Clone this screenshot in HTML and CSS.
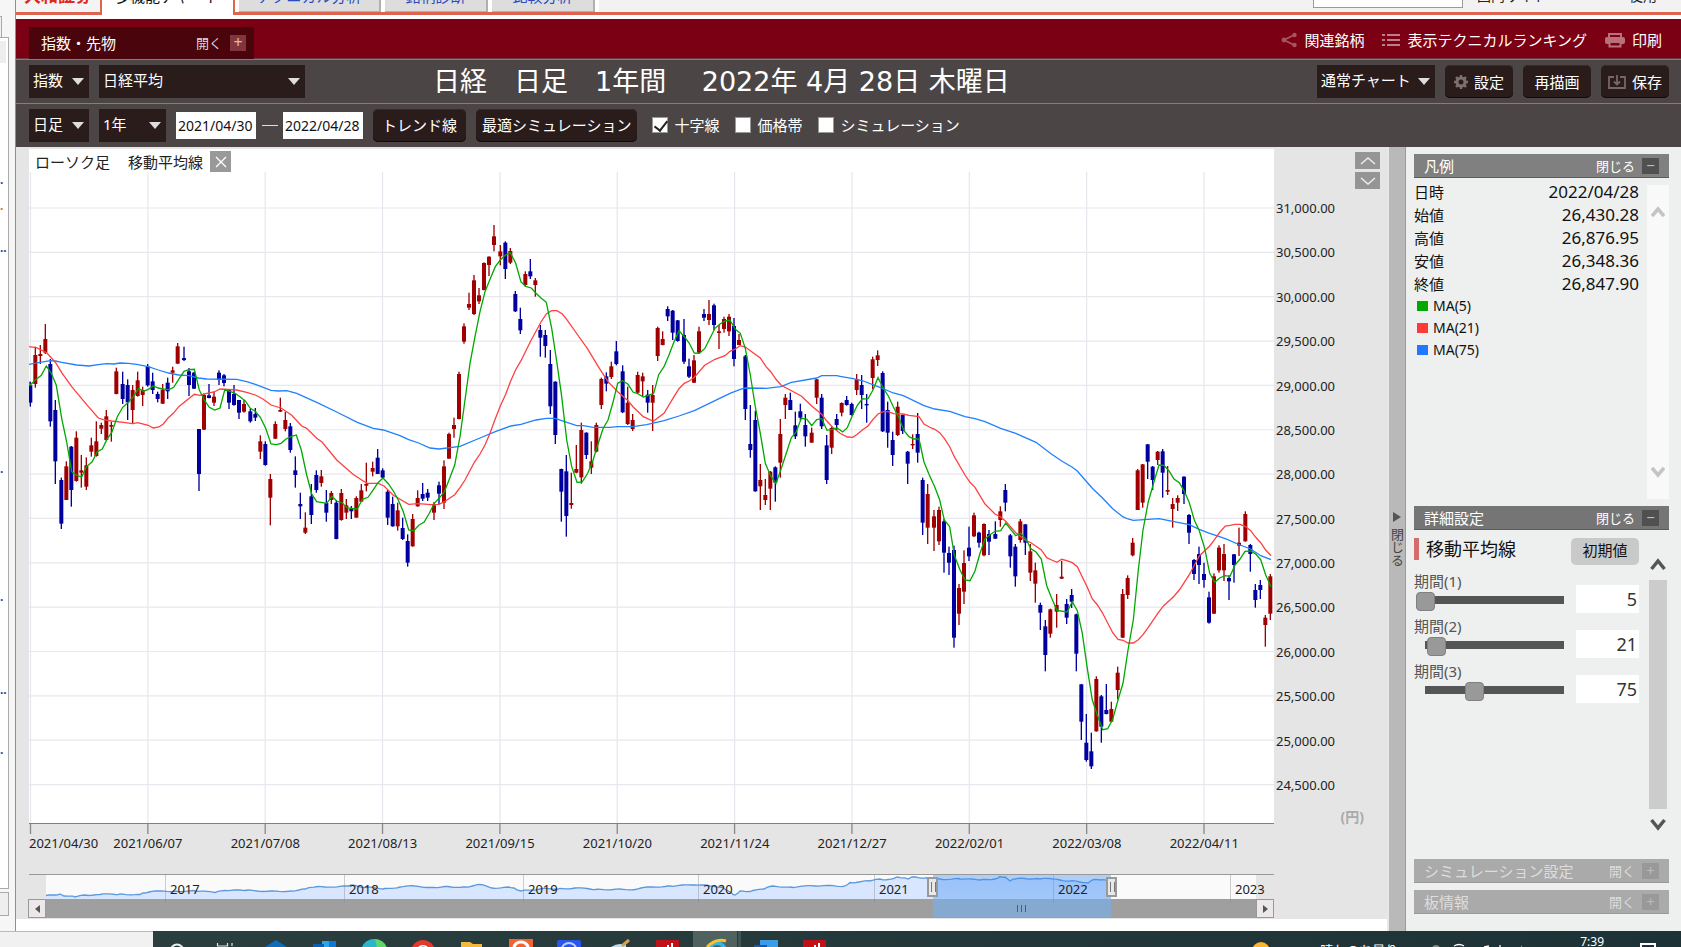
FILE: index.html
```
<!DOCTYPE html>
<html lang="ja">
<head>
<meta charset="utf-8">
<title>多機能チャート</title>
<link rel="stylesheet" href="styles.css">
</head>
<body>
<div class="screen">
  <aside class="rail">
    <div class="rail-tab"></div>
    <div class="rail-box">
      <div class="rail-head"></div>
      <span class="rail-dot d1">.</span>
      <span class="rail-dot d2 warm">.</span>
      <span class="rail-dot d3">..</span>
      <span class="rail-dot d4">.</span>
      <span class="rail-dot d5">.</span>
      <span class="rail-dot d6">..</span>
      <span class="rail-dot d7">.</span>
    </div>
    <div class="rail-button"></div>
  </aside>

  <div class="app">
    <nav class="tabs">
      <a class="tab brand" href="#">大和証券</a>
      <a class="tab active" href="#">多機能チャート</a>
      <a class="tab wide" href="#">テクニカル分析</a>
      <a class="tab" href="#">銘柄診断</a>
      <a class="tab" href="#">比較分析</a>
      <div class="tab-fill">
        <input class="site-search" type="text" aria-label="検索">
        <a class="site-link" href="#">国内サイト</a>
        <a class="site-link help" href="#">使用</a>
      </div>
    </nav>

    <header class="topbar">
      <button class="market" type="button"><span>指数・先物</span><span class="market-open">開く</span><span class="plus">+</span></button>
      <div class="top-links">
        <a href="#"><svg width="16" height="16" viewBox="0 0 16 16"><path d="M14 2.500L3 8l11 5.500" fill="none" stroke="#a85460" stroke-width="1.800"/><circle cx="13.500" cy="3" r="2.200" fill="#a85460"/><circle cx="3" cy="8" r="2.400" fill="#a85460"/><circle cx="13.500" cy="13" r="2.200" fill="#a85460"/></svg>関連銘柄</a>
        <a href="#"><svg width="18" height="16" viewBox="0 0 18 16"><path d="M0 3h3M0 8h3M0 13h3M5 3h13M5 8h13M5 13h13" stroke="#b9808a" stroke-width="2"/></svg>表示テクニカルランキング</a>
        <a href="#"><svg width="20" height="16" viewBox="0 0 20 16"><path d="M4 5V2h12v3" fill="none" stroke="#b9707a" stroke-width="2"/><rect y="5" width="20" height="7" rx="2" fill="#b9707a"/><path d="M4.500 10h11v4.500h-11z" fill="#7c0014" stroke="#b9707a" stroke-width="2"/></svg>印刷</a>
      </div>
    </header>

    <div class="bar">
      <span class="pick w60"><select aria-label="区分"><option>指数</option></select></span>
      <span class="pick w206"><select aria-label="銘柄"><option>日経平均</option></select></span>
      <h1 class="title">日経　日足　1年間　 2022年 4月 28日 木曜日</h1>
      <div class="bar-right">
        <span class="pick w118"><select aria-label="チャート種別"><option>通常チャート</option></select></span>
        <button class="btn" type="button"><svg width="14" height="14" viewBox="0 0 14 14"><circle cx="7" cy="7" r="4" fill="none" stroke="#7d7070" stroke-width="3"/><path d="M7 0v2.500M7 11.500V14M0 7h2.500M11.500 7H14M2 2l1.800 1.800M10.200 10.200L12 12M12 2l-1.800 1.800M3.800 10.200L2 12" stroke="#7d7070" stroke-width="2.400"/></svg>設定</button>
        <button class="btn" type="button">再描画</button>
        <button class="btn" type="button"><svg width="18" height="14" viewBox="0 0 18 14"><path d="M6 2H1v11h16V2h-5M9 0v9M6 6.500l3 3 3-3" fill="none" stroke="#756868" stroke-width="1.800"/></svg>保存</button>
      </div>
    </div>

    <div class="bar second">
      <span class="pick w60"><select aria-label="足種"><option>日足</option></select></span>
      <span class="pick w67"><select aria-label="期間"><option>1年</option></select></span>
      <input class="date" type="text" value="2021/04/30" aria-label="開始日">
      <span class="dash"></span>
      <input class="date" type="text" value="2022/04/28" aria-label="終了日">
      <button class="btn gap" type="button">トレンド線</button>
      <button class="btn snug" type="button">最適シミュレーション</button>
      <label class="check first"><input type="checkbox" checked>十字線</label>
      <label class="check"><input type="checkbox">価格帯</label>
      <label class="check"><input type="checkbox">シミュレーション</label>
    </div>

    <div class="work">
      <main class="chart-col">
        <section class="chart">
          <div class="plot-row">
            <div class="plot">
              <svg id="plot" class="plot-svg" viewBox="0 0 1245 686" preserveAspectRatio="none"></svg>
              <div class="plot-legend"><span>ローソク足</span><span>移動平均線</span><button class="close" type="button" aria-label="削除"><svg width="12" height="12" viewBox="0 0 12 12"><path d="M1 1l10 10M11 1L1 11" stroke="#fff" stroke-width="1.300"/></svg></button></div>
            </div>
            <div class="prices">
              <span>31,000.00</span><span>30,500.00</span><span>30,000.00</span><span>29,500.00</span><span>29,000.00</span><span>28,500.00</span><span>28,000.00</span><span>27,500.00</span><span>27,000.00</span><span>26,500.00</span><span>26,000.00</span><span>25,500.00</span><span>25,000.00</span><span>24,500.00</span>
            </div>
            <div class="tools">
              <button class="step" type="button" aria-label="上へ"><svg width="16" height="8" viewBox="0 0 16 8"><path d="M1 7l7-6 7 6" fill="none" stroke="#eee" stroke-width="1.400"/></svg></button>
              <button class="step" type="button" aria-label="下へ"><svg width="16" height="8" viewBox="0 0 16 8"><path d="M1 1l7 6 7-6" fill="none" stroke="#eee" stroke-width="1.400"/></svg></button>
              <span class="unit">(円)</span>
            </div>
          </div>
          <div class="dates">
            <span class="start">2021/04/30</span><span>2021/06/07</span><span>2021/07/08</span><span>2021/08/13</span><span>2021/09/15</span><span>2021/10/20</span><span>2021/11/24</span><span>2021/12/27</span><span>2022/02/01</span><span>2022/03/08</span><span>2022/04/11</span>
          </div>
          <div class="navigator">
            <div class="nav-view">
              <svg id="overview" class="nav-svg" viewBox="46 875 1210 24" preserveAspectRatio="none"></svg>
              <div class="nav-select"><i class="grip"></i><i class="grip"></i></div>
            </div>
            <div class="years"><i></i><span>2017</span><span>2018</span><span>2019</span><span>2020</span><span>2021</span><span>2022</span><span>2023</span></div>
          </div>
          <div class="scroll">
            <button type="button" aria-label="前へ"><svg width="5" height="8" viewBox="0 0 5 8"><path d="M5 0v8L0 4z" fill="#555"/></svg></button>
            <div class="scroll-track"><div class="scroll-thumb"><svg width="9" height="7" viewBox="0 0 9 7"><path d="M.5 0v7M4.500 0v7M8.500 0v7" stroke="#44607c"/></svg></div></div>
            <button type="button" aria-label="次へ"><svg width="5" height="8" viewBox="0 0 5 8"><path d="M0 0v8l5-4z" fill="#555"/></svg></button>
          </div>
        </section>
      </main>

      <button class="splitter" type="button"><svg width="8" height="10" viewBox="0 0 8 10"><path d="M0 0l8 5-8 5z" fill="#555"/></svg><span>閉じる</span></button>

      <aside class="panel">
        <button class="head" type="button"><span>凡例</span><span class="toggle">閉じる</span><i class="sign">−</i></button>
        <div class="legend">
          <div class="legend-body">
            <table>
              <tr><th>日時</th><td>2022/04/28</td></tr>
              <tr><th>始値</th><td>26,430.28</td></tr>
              <tr><th>高値</th><td>26,876.95</td></tr>
              <tr><th>安値</th><td>26,348.36</td></tr>
              <tr><th>終値</th><td>26,847.90</td></tr>
            </table>
            <div class="ma"><i class="green"></i>MA(5)</div>
            <div class="ma"><i class="red"></i>MA(21)</div>
            <div class="ma"><i class="blue"></i>MA(75)</div>
          </div>
          <div class="vbar pale">
            <svg width="14" height="12" viewBox="0 0 14 12"><path d="M1 10l6-7 6 7" fill="none" stroke="#c4c4c4" stroke-width="3.500"/></svg>
            <svg width="14" height="12" viewBox="0 0 14 12"><path d="M1 2l6 7 6-7" fill="none" stroke="#c4c4c4" stroke-width="3.500"/></svg>
          </div>
        </div>

        <button class="head dark" type="button"><span>詳細設定</span><span class="toggle">閉じる</span><i class="sign">−</i></button>
        <div class="detail">
          <div class="detail-body">
            <div class="detail-title"><h2>移動平均線</h2><button class="reset" type="button">初期値</button></div>
            <div class="term"><label for="t1">期間(1)</label><input id="t1" type="range" min="5" max="204" value="5"><input class="num" type="text" value="5" aria-label="期間(1)の値"></div>
            <div class="term"><label for="t2">期間(2)</label><input id="t2" type="range" min="5" max="204" value="21"><input class="num" type="text" value="21" aria-label="期間(2)の値"></div>
            <div class="term"><label for="t3">期間(3)</label><input id="t3" type="range" min="5" max="204" value="75"><input class="num" type="text" value="75" aria-label="期間(3)の値"></div>
          </div>
          <div class="vbar">
            <svg width="16" height="13" viewBox="0 0 16 13"><path d="M1.500 11L8 3l6.500 8" fill="none" stroke="#555" stroke-width="3.500"/></svg>
            <div class="vthumb"></div>
            <svg width="16" height="13" viewBox="0 0 16 13"><path d="M1.500 2L8 10l6.500-8" fill="none" stroke="#555" stroke-width="3.500"/></svg>
          </div>
        </div>
        <button class="head off" type="button"><span>シミュレーション設定</span><span class="toggle">開く</span><i class="sign">+</i></button>
        <button class="head off" type="button"><span>板情報</span><span class="toggle">開く</span><i class="sign">+</i></button>
      </aside>
    </div>
  </div>
</div>

<footer class="taskbar">
  <div class="status"></div>
  <div class="icons">
    <svg width="690" height="16" viewBox="153 931 690 16">
      <rect x="693" y="931" width="44" height="16" fill="#506260"/><rect x="738" y="931" width="3" height="16" fill="#3f5452"/>
      <circle cx="177" cy="951" r="6.500" fill="none" stroke="#e8eeee" stroke-width="2"/>
      <path d="M217.500 943v3h10v-3M232 943v3" fill="none" stroke="#dfe6e6" stroke-width="1.200"/>
      <path d="M262 949l14-9 14 9z" fill="#0f6cbd"/>
      <path d="M322 941h14v6h-14z" fill="#28a8ea"/><path d="M329 941h7v6h-7z" fill="#0f78d4"/><path d="M313 944h11v3h-11z" fill="#0a5fb4"/>
      <circle cx="374" cy="952" r="13" fill="#29b6c8"/><path d="M375 939a13 13 0 0 1 12 9h-10z" fill="#5ed66a"/>
      <circle cx="423" cy="952" r="12" fill="#e23b2e"/><circle cx="423" cy="952" r="7" fill="#fff"/><circle cx="423" cy="952" r="5.500" fill="#2b7de9"/>
      <path d="M461 942h9l3 2h9v3h-21z" fill="#f3b93a"/>
      <rect x="509" y="939" width="24" height="10" fill="#f4622e"/><path d="M514 948a7 6 0 0 1 14 0" fill="none" stroke="#fff" stroke-width="3"/>
      <rect x="557" y="940" width="24" height="10" rx="2" fill="#2a55f0"/><path d="M562 949a7 6 0 0 1 14 0" fill="none" stroke="#bcd0ff" stroke-width="2"/>
      <path d="M611 947q7-5 15-2v2z" fill="#bcdcec"/><path d="M622 946l7-6" stroke="#d8a050" stroke-width="3"/>
      <rect x="656" y="940" width="23" height="9" rx="1" fill="#c01018"/><path d="M668 947v-2M672 947v-4" stroke="#fff" stroke-width="2"/>
      <circle cx="717" cy="951" r="8" fill="none" stroke="#35b4e8" stroke-width="4"/><path d="M707 947q9-9 19-6" fill="none" stroke="#f4c430" stroke-width="3"/>
      <rect x="760" y="940" width="18" height="8" fill="#3b9de8"/><rect x="754" y="945" width="13" height="3" fill="#1558b0"/>
      <rect x="803" y="940" width="23" height="9" rx="1" fill="#c01018"/><path d="M815 947v-2M819 947v-4" stroke="#fff" stroke-width="2"/>
    </svg>
  </div>
  <div class="tray">
    <svg class="sun" width="18" height="16" viewBox="0 0 18 16"><circle cx="9" cy="20" r="9" fill="#ffb52a"/></svg>
    <span class="weather">晴れのち曇り</span>
    <svg width="90" height="16" viewBox="0 0 90 16"><circle cx="4" cy="18" r="4" fill="#888"/><path d="M22 15q5-3 10 0M52 16l5-1M68 16v-2M90 16l1-3" fill="none" stroke="#fff" stroke-width="1.300"/></svg>
    <span class="clock">7:39</span>
    <svg width="16" height="16" viewBox="0 0 16 16"><path d="M1 18v-5h14v5" fill="none" stroke="#fff" stroke-width="2"/></svg>
  </div>
</footer>
<script src="chart.js"></script>
</body>
</html>
```

FILE: styles.css
```
* { box-sizing: border-box; }
body {
  margin: 0;
  height: 100vh;
  overflow: hidden;
  display: flex;
  flex-direction: column;
  background: #fff;
  color: #222;
  font: 15px/20px "Noto Sans", "Noto Sans CJK JP", sans-serif;
}
button, input, select { font: inherit; color: inherit; margin: 0; }
button { border: 0; padding: 0; background: none; cursor: pointer; }
a { color: inherit; text-decoration: none; }
svg { display: block; flex: none; }
i { font-style: normal; }

.screen { flex: 1; min-height: 0; display: flex; }

/* left rail */
.rail { flex: none; width: 16px; background: #f6f6f6; border-right: 1px solid #8c8ca4; display: flex; flex-direction: column; padding-top: 16px; }
.rail-tab { width: 2px; height: 21px; background: #f2f2f2; border-top: 1px solid #aaa; border-right: 1px solid #aaa; }
.rail-box { position: relative; width: 9px; flex: 1; background: #fff; border: solid #aaa; border-width: 1px 1px 1px 0; padding-top: 3px; }
.rail-head { height: 22px; width: 6px; background: #eee; }
.rail-button { width: 9px; height: 24px; margin: 3px 0 15px; background: #eee; border: solid #aaa; border-width: 1px 1px 1px 0; }
.rail-dot { position: absolute; left: 0; font-size: 12px; line-height: 12px; font-weight: 700; color: #1a4c9c; }
.warm { color: #c07a20; }
.d1 { top: 16%; }
.d2 { top: 19%; }
.d3 { top: 24%; }
.d4 { top: 50%; }
.d5 { top: 65%; }
.d6 { top: 76%; }
.d7 { top: 83%; }

.app { flex: 1; min-width: 0; display: flex; flex-direction: column; }

/* site tabs */
.tabs { height: 19px; display: flex; align-items: flex-end; overflow: hidden; padding-bottom: 4px; }
.tab { flex: none; width: 103px; height: 40px; margin: 0 4px 3px 0; padding-top: 12px; background: #ddd; border: solid #b0b0b0; border-width: 0 2px 1px 0; box-shadow: 0 3px #de6450; color: #2a4cc0; line-height: 24px; text-align: center; white-space: nowrap; position: relative; }
.tab::after { content: ""; position: absolute; top: 40px; right: -7px; width: 5px; height: 3px; background: #de6450; }
.tab.wide { width: 142px; }
.tab.brand { width: 86px; margin-right: 0; background: #f4f4f4; border-color: #de6450; border-bottom: 0; color: #e02a20; font-weight: 700; font-size: 17px; }
.tab.active { width: 133px; height: 43px; margin-bottom: 0; background: #fff; border-color: #de6450; border-bottom: 0; box-shadow: none; color: #111; }
.tab.brand::after { display: none; }
.tab-fill { flex: 1; height: 15px; display: flex; justify-content: flex-end; background: #f2f2f2; border-bottom: 3px solid #de6450; padding-right: 24px; }
.site-search { width: 150px; height: 30px; margin-top: -22px; border: 1px solid #999; background: #fff; }
.site-link { margin: -13px 0 0 14px; font-size: 14px; line-height: 18px; white-space: nowrap; }
.site-link.help { margin-left: 82px; }

/* red band */
.topbar { height: 40px; background: #7c0014; display: flex; justify-content: space-between; border-bottom: 1px solid #6b3a3e; padding-left: 13px; color: #fff; }
.market { width: 225px; height: 32px; margin-top: 8px; padding: 0 8px 0 12px; background: #49040c; display: flex; align-items: center; font-size: 15px; }
.market-open { margin-left: auto; font-size: 13px; color: #ddd; }
.plus { width: 16px; height: 16px; margin-left: 8px; background: #82353d; color: #ddb8bb; font-size: 16px; line-height: 15px; }
.top-links { display: flex; align-items: center; gap: 18px; padding: 2px 19px 0 0; }
.top-links a { display: flex; align-items: center; gap: 7px; }

/* control bars */
.bar { height: 44px; background: #4b4645; border-top: 1px solid #837d7c; display: flex; align-items: center; padding: 0 12px 0 13px; color: #fff; }
.second { padding-bottom: 1px; }
.pick { position: relative; height: 33px; margin-right: 10px; display: block; flex: none; }
.pick select { appearance: none; width: 100%; height: 100%; border: 0; border-radius: 0; background: #2a1c1b; padding: 0 0 3px 4px; }
.pick::after { content: ""; position: absolute; right: 5px; top: 13px; border: solid transparent; border-width: 7px 6px 0; border-top-color: #ddd; pointer-events: none; }
.w60 { width: 60px; }
.w67 { width: 67px; }
.w118 { width: 118px; }
.w206 { width: 206px; }
.title { margin: 0 0 0 118px; font: 400 27px/36px "DejaVu Sans", "Noto Sans CJK JP", sans-serif; white-space: pre; }
.bar-right { margin-left: auto; display: flex; }
.btn { height: 33px; padding: 0 9px; margin-right: 10px; background: #2a1c1b; border-radius: 5px; box-shadow: inset 0 -1px #120909, inset 0 1px #382a29; display: flex; align-items: center; justify-content: center; gap: 6px; white-space: nowrap; }
.bar-right .btn { width: 68px; padding: 0; }
.bar-right .btn:last-child { margin-right: 0; }
.btn.snug { padding: 0 6px; }
.gap { margin-left: 10px; }
.date { width: 80px; height: 27px; border: 0; padding: 0 2px; background: #fff; color: #111; font-size: 14px; }
.dash { width: 16px; height: 1px; margin: 0 5px 0 6px; background: #ddd; }
.check { display: flex; align-items: center; gap: 6px; margin-left: 16px; }
.check.first { margin-left: 5px; }
.check input { appearance: none; width: 16px; height: 16px; background: #fff; border: 1px solid #999; position: relative; }
.check input:checked::after { content: ""; position: absolute; left: 4px; top: 0; width: 6px; height: 11px; border: solid #222; border-width: 0 2px 2px 0; transform: rotate(38deg); }

/* work area */
.work { flex: 1; min-height: 0; display: flex; }
.chart-col { flex: 1; min-width: 0; display: flex; padding-bottom: 12px; background: #fff; }
.chart { flex: 1; min-width: 0; display: flex; flex-direction: column; background: #e5e5e5; padding: 2px 0 1px 13px; }
.plot-row { flex: 1; min-height: 0; display: flex; }
.plot { position: relative; flex: 1; min-width: 0; }
.plot-svg { position: absolute; width: 100%; height: 100%; }
.plot-legend { position: absolute; left: 6px; top: 2px; display: flex; gap: 18px; align-items: center; line-height: 18px; padding-bottom: 2px; }
.close { width: 21px; height: 21px; margin-left: -11px; background: #999; display: flex; align-items: center; justify-content: center; }
.prices { flex: none; width: 66px; padding: 49px 0 40px 2px; display: flex; flex-direction: column; justify-content: space-between; font-size: 13px; }
.tools { flex: none; width: 47px; padding: 3px 7px 8px 0; display: flex; flex-direction: column; align-items: flex-end; gap: 3px; }
.step { width: 25px; height: 17px; background: #959595; display: flex; align-items: center; justify-content: center; }
.unit { margin: auto 16px 0 0; color: #aaa; font-weight: 700; font-size: 14px; }
.dates { height: 39px; margin-right: 113px; display: grid; grid-template-columns: minmax(0, 60fr) repeat(10, minmax(0, 117fr)) 11fr; font-size: 13px; line-height: 17px; text-align: center; white-space: nowrap; }
.dates .start { text-align: left; }
.navigator { position: relative; height: 25px; margin-right: 113px; padding: 0 18px 0 17px; border-top: 1px solid #999; }
.nav-view { position: relative; height: 24px; background: #fafafa; }
.nav-svg { width: 100%; height: 24px; }
.nav-select { position: absolute; left: 73.3%; top: 0; width: 14.7%; height: 24px; background: linear-gradient(#3b8df066, #3b8df059); display: flex; justify-content: space-between; align-items: center; }
.grip { width: 11px; height: 20px; margin: 0 -6px; background: #e8e8e8; border: 2px solid #999; position: relative; }
.grip::after { content: ""; position: absolute; left: 2px; top: 3px; width: 3px; height: 10px; border: solid #777; border-width: 0 1px; }
.years { position: absolute; inset: 0; display: grid; grid-template-columns: 136fr 179fr 179fr 175fr 176fr 179fr 177fr 44fr; font-size: 13px; line-height: 28px; }
.years span { border-left: 1px solid #8886; padding-left: 4px; }
.scroll { height: 19px; margin: 0 113px 0 -1px; display: flex; }
.scroll button { width: 18px; background: #ece8ea; border: 1px solid #999; display: flex; align-items: center; justify-content: center; }
.scroll-track { flex: 1; background: #9f9f9f; }
.scroll-thumb { width: 14.7%; height: 18px; margin-left: 73.3%; background: #86a9cf; display: flex; align-items: center; justify-content: center; }

.splitter { flex: none; width: 19px; background: #b9b9b9; border: solid #e8e8e8; border-width: 0 1px 0 2px; border-right-color: #999; display: flex; flex-direction: column; align-items: center; justify-content: center; gap: 6px; color: #444; font-size: 13px; }
.splitter span { writing-mode: vertical-rl; line-height: 14px; }

/* side panel */
.panel { flex: none; width: 275px; padding: 7px 12px 17px 8px; background: #eef0ef; display: flex; flex-direction: column; }
.head { flex: none; height: 24px; padding: 0 10px; background: #808080; border-bottom: 1px solid #5c5c5c; color: #fff; display: flex; align-items: center; }
.head .toggle { margin-left: auto; font-size: 13px; }
.sign { width: 17px; height: 16px; margin-left: 7px; background: #505050; color: #bbb; line-height: 15px; }
.head.dark { background: #757575; }
.head.off { background: #aaa; border-color: #999; color: #ddd; }
.head.off + .head.off { margin-top: 7px; }
.off .sign { background: #999; color: #bbb; }
.legend { height: 314px; margin: 7px 0; display: flex; justify-content: space-between; }
.legend-body { width: 225px; margin-top: -5px; color: #111; }
.legend table { width: 100%; border-collapse: collapse; }
.legend tr { height: 23px; }
.legend th, .legend td { padding: 0; line-height: 22px; font-weight: 400; text-align: left; }
.legend td { text-align: right; font-size: 17px; }
.ma { height: 22px; line-height: 22px; display: flex; align-items: center; font-size: 14px; }
.ma i { width: 11px; height: 10px; margin: 0 5px 0 3px; }
.green { background: #00a800; }
.red { background: #ff3838; }
.blue { background: #2078ff; }
.vbar { width: 22px; display: flex; flex-direction: column; align-items: center; padding: 28px 0 20px; }
.vbar.pale { background: #f9f9f9; justify-content: space-between; padding: 21px 0; }
.vthumb { flex: 1; width: 18px; margin: 9px 0; background: #ccc; }
.detail { flex: 1; min-height: 0; display: flex; justify-content: space-between; padding-bottom: 8px; }
.detail-body { width: 225px; padding-top: 8px; }
.detail-title { display: flex; justify-content: space-between; align-items: flex-start; height: 33px; }
.detail-title h2 { margin: 0; border-left: 5px solid #d56c6c; padding-left: 7px; font-size: 18px; font-weight: 400; line-height: 22px; color: #111; }
.reset { width: 68px; height: 27px; padding-bottom: 4px; border-radius: 5px; background: #c9c9c9; color: #111; }
.term { height: 45px; display: grid; grid-template-columns: 162px 63px; grid-template-rows: 20px 25px; color: #555; }
.term label { grid-column: 1; }
.term input[type=range] { appearance: none; grid-column: 1; width: 157px; height: 20px; margin-left: 2px; background: linear-gradient(#555, #555) center 5px / calc(100% - 18px) 8px no-repeat; }
.term input[type=range]::-webkit-slider-thumb { appearance: none; width: 19px; height: 19px; border-radius: 4px; border: 1px solid #808080; background: #999; }
.num { grid-column: 2; grid-row: 1 / 3; height: 28px; margin-top: 14px; width: 63px; border: 0; background: #fff; padding: 0 2px; text-align: right; font-size: 18px; color: #333; }

/* taskbar */
.taskbar { flex: none; height: 16px; display: flex; overflow: hidden; background: linear-gradient(90deg, #2c4040, #1d3236); color: #fff; }
.status { width: 153px; background: #f1f1f1; border-top: 1px solid #bbb; }
.tray { margin-left: auto; padding-right: 25px; display: flex; align-items: flex-start; }
.weather { margin: 11px 34px 0 50px; font-size: 13px; line-height: 16px; white-space: nowrap; }
.clock { margin: 4px 36px 0 58px; font-size: 12px; line-height: 14px; }
```

FILE: chart.js
```
const NS = 'http://www.w3.org/2000/svg';
function add(parent, name, attrs) {
  const el = document.createElementNS(NS, name);
  for (const key in attrs) el.setAttribute(key, attrs[key]);
  parent.appendChild(el);
  return el;
}

// Each block: origin in plot units, candles as "colour x high low top bottom" (thirds of a unit), and three averages.
const blocks = [
  {
    x: -9, y: 51,
    candles: `b 31 545 620 556 608;r 46 440 563 465 552;r 61 435 492 462 468;r 76 372 462 417 458;b 91 477 680 492 664;b 106 600 852 630 784;b 124 833 987 840 971;r 139 784 900 799 900;b 154 738 920 740 870;r 169 694 845 713 843;r 184 765 863 811 818;r 199 772 870 796 860;r 214 713 770 736 755;r 229 664 770 724 768;r 244 668 702 675 686;r 259 630 722 649 720;r 274 665 725 675 680;r 289 503 583 514 582;b 308 515 612 552 597;b 323 538 660 555 607;r 338 555 670 570 630;r 353 515 590 541 588;r 368 560 618 570 585;b 383 492 560 499 556;b 398 518 582 544 570;b 413 575 607 582 597;r 428 552 612 569 611;b 443 533 597 548 574;r 458 500 548 511 518;r 473 429 492 439 491;b 492 440 483 474 480;b 507 504 588 514 555;b 522 516 567 518 566;b 537 687 873 687 822;r 552 580 690 585 689;b 567 552 595 586 594;r 582 575 618 590 608;b 597 511 555 518 540;b 612 522 559 526 549;b 627 568 627 570 608;b 642 555 617 582 615;b 657 600 657 600 638;r 672 600 638 612 635;b 691 626 668 634 664;b 706 624 663 642 653;r 721 706 777 724 755;b 736 724 797 732 795;r 751 822 976 837 893;r 766 664 717 672 716;r 781 593 636 630 635;r 796 636 694 660 687;b 811 669 758 679 750;b 826 769 863 811 825;b 841 878 957 912 919;r 856 937 1002 983 998;b 874 852 972 889 945;b 889 811 878 825 870;r 904 810 860 829 849;b 919 870 965 909 938;r 934 873 912 879 900;b 949 900 1018 908 1017;r 964 867 962 879 960;r 979 897 957 916 938;b 994 918 957 926 934;r 1009 889 953 894 953;r 1024 852 905 871 905;r 1039 788 874 852 857;r 1058 785 829 804 815;b 1073 747 822 773 822;b 1088 805 834 811 833;b 1103 870 975 875 953;b 1118 890 980 912 979;r 1133 908 992 931 979;b 1148 953 1020 984 1017;b 1163 1003 1100 1023 1088;r 1178 942 1040 957 1039;r 1193 871 920 894 919;b 1208 849 903 882 896;b 1223 867 903 878 893;r 1242 906 960 916 938;b 1257 845 912 856 881`,
    ma5: '27,545 31,555 46,540 64,526 79,498 94,520 109,556 125,655 140,726 155,815 170,826 185,831 200,799 216,786 232,755 247,747 262,716 275,698 292,650 308,622 325,607 340,590 356,565 370,574 385,568 400,558 415,564 430,567 447,569 461,562 476,538 492,514 506,509 523,508 538,570 553,600 568,622 584,630 600,624 614,570 630,574 645,580 660,590 676,603 691,625 706,634 721,652 737,685 753,732 769,734 783,730 798,717 813,710 829,705 844,750 860,825 875,882 890,905 920,910 936,889 950,903 966,908 982,924 1012,927 1027,898 1044,892 1058,872 1074,848 1089,834 1105,851 1120,873 1135,900 1150,935 1166,990 1181,992 1196,976 1212,967 1228,940 1243,910 1257,895',
    ma21: '27,440 49,443 80,458 107,488 125,518 155,560 200,614 235,654 250,659 275,663 310,667 338,671 353,668 385,676 400,684 417,681 430,672 445,653 460,640 476,620 523,583 540,586 560,580 582,576 600,567 650,570 680,577 706,585 730,598 753,615 783,624 815,646 845,678 860,685 890,715 906,726 950,780 998,822 1025,840 1042,850 1075,850 1092,858 1120,886 1166,913 1196,911 1232,914 1257,913',
    ma75: '27,493 60,487 91,482 107,483 125,487 170,495 207,498 235,494 260,491 282,492 300,489 325,490 350,493 385,500 415,510 446,519 476,525 507,527 535,534 560,537 650,538 680,545 706,553 753,571 775,573 800,572 830,580 890,607 950,636 1012,667 1060,685 1090,690 1140,707 1166,719 1196,729 1230,744 1257,747'
  },
  {
    x: 401, y: 51,
    candles: `r 42 781 927 799 908;r 57 698 776 702 776;r 72 653 713 675 687;r 87 515 658 522 657;r 102 370 431 379 425;r 117 278 330 312 323;r 132 225 345 241 342;r 147 264 312 286 304;r 162 187 271 189 270;r 177 169 228 170 195;r 192 75 154 109 135;r 211 135 196 154 169;b 226 124 237 128 207;r 241 144 192 153 188;b 256 273 336 282 334;b 271 323 402 357 391;r 286 214 260 222 255;b 301 177 237 214 229;r 316 234 290 241 255;b 331 375 470 390 413;b 346 390 473 405 438;b 361 450 642 492 619;b 376 544 732 545 705;b 394 806 965 807 875;b 409 765 1010 814 948;r 424 818 926 909 915;r 439 735 820 807 818;r 454 668 851 690 832;b 469 697 777 698 765;r 484 724 822 784 803;r 499 668 757 675 755;r 514 533 627 537 615;b 529 517 574 529 551;r 544 485 537 499 531;b 559 423 496 454 492;b 578 496 639 514 637;r 593 560 675 608 672;r 608 642 693 660 687;r 623 515 582 525 578;r 638 518 590 529 544;b 653 570 638 584 608;r 668 555 693 585 608;r 683 380 483 384 468;r 698 394 436 417 435;b 713 319 363 327 349;b 728 330 420 332 398;b 743 360 425 361 423;b 762 357 492 405 485;b 777 476 534 499 530;r 792 465 549 481 548;r 807 380 460 394 458;b 822 327 363 342 353;r 837 300 375 342 360;b 852 311 390 316 375;r 867 375 447 394 399;r 882 350 398 357 387;r 897 342 408 350 394;b 912 354 499 378 477;r 927 402 436 420 435;b 946 465 660 469 627;b 961 615 773 732 750;b 976 632 875 660 874;r 991 792 930 840 859;r 1006 837 915 885 900;r 1021 813 930 815 866;b 1036 799 905 802 848;r 1051 657 833 702 788;r 1066 582 657 593 615;b 1081 578 630 600 630;b 1096 635 717 676 709;b 1111 611 660 634 653;b 1126 642 740 675 709;r 1145 683 728 698 728;r 1160 537 612 538 593;b 1175 582 687 593 679;b 1190 705 852 736 840;r 1205 678 762 684 743;b 1220 642 690 657 675;r 1235 607 649 609 638;b 1250 588 617 600 615`,
    ma5: '27,895 43,876 58,838 74,795 90,710 105,600 120,490 135,410 150,335 165,275 180,238 196,200 211,180 227,164 241,158 257,190 273,246 287,259 304,264 318,280 334,295 349,307 365,385 381,490 395,590 410,720 425,800 441,847 456,846 473,820 488,784 503,735 519,686 534,660 549,607 563,550 578,542 594,553 609,576 625,582 640,591 655,586 671,580 686,524 702,500 717,465 732,425 747,392 763,410 778,430 793,459 808,460 824,446 840,415 855,385 870,372 885,363 900,361 916,388 931,400 946,445 961,525 976,620 991,700 1006,790 1022,828 1038,850 1053,808 1069,760 1084,713 1099,695 1114,655 1130,657 1145,677 1160,659 1175,656 1191,691 1206,688 1221,684 1230,690',
    ma21: '27,913 43,905 74,884 90,863 105,840 133,787 150,762 165,735 180,700 196,656 211,618 227,583 242,543 257,509 273,482 302,423 333,366 349,342 365,332 381,332 397,342 410,358 441,402 472,445 505,500 534,545 563,575 594,602 609,620 640,650 670,664 702,640 732,590 747,566 763,550 778,543 793,532 824,496 855,478 885,467 900,454 916,447 931,437 946,441 961,452 991,474 1008,500 1022,515 1038,538 1053,555 1070,565 1114,588 1145,618 1175,643 1191,664 1206,680 1221,692 1230,700',
    ma75: '27,747 90,739 150,714 196,695 242,678 273,673 318,660 349,655 376,655 395,662 440,677 460,677 490,682 540,682 563,680 609,680 650,674 702,662 747,648 793,632 824,617 855,602 900,580 931,568 946,564 1008,565 1053,560 1084,547 1160,534 1175,527 1221,527 1230,529'
  },
  {
    x: 811, y: 151,
    candles: `b 35 308 347 312 345;r 50 222 285 238 270;b 65 225 327 255 285;b 80 282 368 312 316;r 98 170 268 178 234;r 113 151 198 166 180;b 128 214 396 219 394;b 143 305 443 330 398;b 158 395 498 420 465;r 173 305 408 320 405;b 188 344 402 345 393;b 203 453 552 455 491;r 218 403 447 432 436;b 233 339 488 402 458;b 248 533 705 540 668;r 263 552 732 582 683;r 282 630 753 649 683;r 297 620 735 630 724;b 312 657 818 664 758;b 327 740 825 759 788;b 342 737 1043 750 1013;r 357 852 975 864 941;r 372 751 912 789 875;b 387 680 783 743 769;r 402 638 711 646 709;b 417 695 743 698 728;r 432 670 769 672 766;b 447 690 765 702 725;b 466 664 717 702 716;r 481 619 680 634 660;b 496 552 634 570 608;b 511 702 803 706 769;b 526 732 860 740 829;r 541 657 728 664 720;b 556 672 765 673 728;r 571 732 843 754 818;r 586 788 908 811 851;b 601 908 990 915 938;b 616 960 1114 979 1065;r 631 926 1013 928 1001;r 650 882 983 915 935;r 665 783 837 830 836;b 680 897 972 912 953;b 695 867 924 885 905;b 709 941 1114 943 1061;b 724 1152 1320 1153 1265;b 739 1242 1385 1328 1380;b 754 1298 1407 1354 1399;r 769 1129 1295 1137 1294;b 784 1185 1328 1189 1280;b 799 1152 1243 1230 1242;r 814 1205 1267 1227 1265;r 833 1100 1198 1118 1170;r 848 867 1014 882 1013;r 863 826 897 834 885;r 878 714 769 728 766;r 893 507 630 511 630;r 908 492 623 493 608;b 923 432 537 433 485;b 938 498 570 500 540;r 953 453 495 455 480;b 968 447 593 454 518;r 983 498 585 570 575;r 998 594 683 612 627;r 1013 586 633 594 608;b 1032 529 612 530 582;b 1047 642 732 645 698;b 1062 777 840 780 822;b 1077 740 852 762 795;b 1092 788 863 822 840;b 1107 875 971 892 968;r 1122 820 942 829 941;r 1137 736 818 743 811;r 1152 732 843 762 811;b 1167 826 900 834 844;b 1182 762 848 763 795;r 1197 683 768 728 737;r 1216 634 725 642 724;b 1231 732 815 735 762;b 1246 852 923 870 900;b 1261 840 897 855 870;r 1276 945 1040 953 975;r 1291 822 960 829 941`,
    ma5: '0,390 8,396 22,383 37,347 52,316 67,297 84,296 99,270 114,233 130,265 145,288 160,320 176,352 192,392 207,410 222,417 237,417 252,486 268,525 284,560 299,600 313,660 329,680 343,765 359,808 375,840 390,842 405,813 420,760 435,717 450,704 465,694 482,692 497,669 512,688 527,707 542,700 558,718 573,746 588,756 604,777 620,857 635,895 651,931 681,936 697,905 712,932 727,1000 742,1105 757,1200 772,1245 788,1289 803,1286 818,1258 834,1200 849,1150 864,1050 880,960 895,810 909,690 925,605 941,548 957,495 972,496 987,513 1002,537 1018,548 1033,574 1048,608 1063,660 1078,692 1094,745 1109,820 1124,847 1140,833 1156,827 1170,829 1185,795 1200,777 1215,754 1232,753 1247,762 1262,779 1277,825 1293,860',
    ma21: '0,400 22,411 38,412 52,403 67,390 84,378 99,358 114,342 130,335 145,335 160,341 190,342 207,346 237,350 252,372 268,381 284,388 299,398 313,415 329,440 343,470 375,525 390,547 405,562 435,612 465,642 482,651 497,664 527,698 558,722 573,728 604,750 620,773 635,780 651,787 665,778 680,782 697,788 712,800 742,862 757,897 772,914 788,940 818,998 834,1018 849,1021 864,1029 880,1029 895,1019 909,1004 925,982 955,938 971,917 1000,891 1018,870 1048,824 1078,768 1109,738 1124,718 1140,696 1156,678 1170,676 1185,673 1200,673 1215,679 1232,692 1247,712 1262,728 1277,750 1293,767',
    ma75: '0,229 40,236 70,243 114,260 160,279 190,287 252,317 284,327 329,334 375,350 405,356 435,365 482,385 527,400 588,427 635,463 665,483 697,502 712,513 757,565 788,595 818,626 848,650 864,657 880,661 957,656 987,662 1048,674 1078,688 1109,700 1156,716 1200,735 1232,747 1262,767 1293,779'
  }
];

const plot = document.getElementById('plot');
add(plot, 'rect', { x: 0, y: 0, width: 1245, height: 674, fill: '#fff' });
for (let i = 0; i < 14; i++) {
  const y = 59 + i * 44.35;
  add(plot, 'path', { d: `M0 ${y}H1245`, stroke: '#e8e8ee', 'stroke-width': 1.2 });
}
for (let i = 0; i < 11; i++) {
  const x = 1.5 + i * 117.35;
  add(plot, 'path', { d: `M${x} 23V674`, stroke: '#e6e6ee', 'stroke-width': 1.2 });
  add(plot, 'path', { d: `M${x} 674V685`, stroke: '#888', 'stroke-width': 1.3 });
}
add(plot, 'path', { d: 'M0 674.500H1245', stroke: '#808080', 'stroke-width': 1 });

const groups = blocks.map(b => add(plot, 'g', { transform: `translate(${b.x} ${b.y}) scale(${1 / 3})` }));
blocks.forEach((b, n) => {
  b.candles.split(';').forEach(row => {
    const [c, ...v] = row.split(' ');
    const [x, high, low, top, bottom] = v.map(Number);
    const fill = c === 'r' ? '#a00000' : '#0000a0';
    add(groups[n], 'rect', { x: x - 2, y: high, width: 4, height: low - high, fill });
    add(groups[n], 'rect', { x: x - 6, y: top, width: 12, height: Math.max(3, bottom - top), fill });
  });
});
// Averages join across blocks, so each one is drawn as a single line.
[['ma75', '#2080ff'], ['ma21', '#ff4040'], ['ma5', '#00a800']].forEach(([key, stroke]) => {
  const points = blocks.flatMap(b => b[key].split(' ').map(p => {
    const [x, y] = p.split(',').map(Number);
    return `${(b.x + x / 3).toFixed(1)},${(b.y + y / 3).toFixed(1)}`;
  })).join(' ');
  add(plot, 'polyline', { points, fill: 'none', stroke, 'stroke-width': 1.3 });
});

// Overview strip
const base = '46,895.5 60,894 64,896 75,897 85,895 100,894.5 120,894 140,894.5 143,893 158,891 175,891 195,891 215,892.5 225,890.5 245,890.5 270,891 290,891 305,889 318,886.5 325,887 345,886 352,885 365,887.5 385,888.5 400,887 415,886 435,887.5 445,886.5 465,887 480,884.5 492,888 508,887 514,888 521,891 540,889 560,888.5 575,888 595,889.5 620,889 635,889.5 650,887 670,886 695,885 710,886 722,887 730,892 735,895 740,891 750,891.5 764,889 773,886 790,887 815,886 845,886 850,882.5 870,881 880,879 888,879.5 897,877 908,879 912,877 925,878 933,879 940,879 960,879 980,880 992,879.5 1000,876.5 1005,877 1010,881 1015,879 1025,878.5 1040,879 1050,878.5 1060,880 1070,881 1080,882 1088,883 1092,880 1100,880 1111,881'
  .split(' ').map(p => p.split(',').map(Number));
const trend = [];
base.forEach(([x, y], i) => {
  trend.push(`${x},${y}`);
  const next = base[i + 1];
  if (!next) return;
  for (let k = x + 3; k < next[0] - 1; k += 3) {
    const t = (k - x) / (next[0] - x);
    trend.push(`${k},${(y + (next[1] - y) * t + Math.sin(k * 2.3) * 0.6).toFixed(1)}`);
  }
});
const overview = document.getElementById('overview');
add(overview, 'polygon', { points: `46,899 ${trend.join(' ')} 1111,899`, fill: '#d9e6ff' });
add(overview, 'polyline', { points: trend.join(' '), fill: 'none', stroke: '#5b98dc', 'stroke-width': 1.3 });
```
